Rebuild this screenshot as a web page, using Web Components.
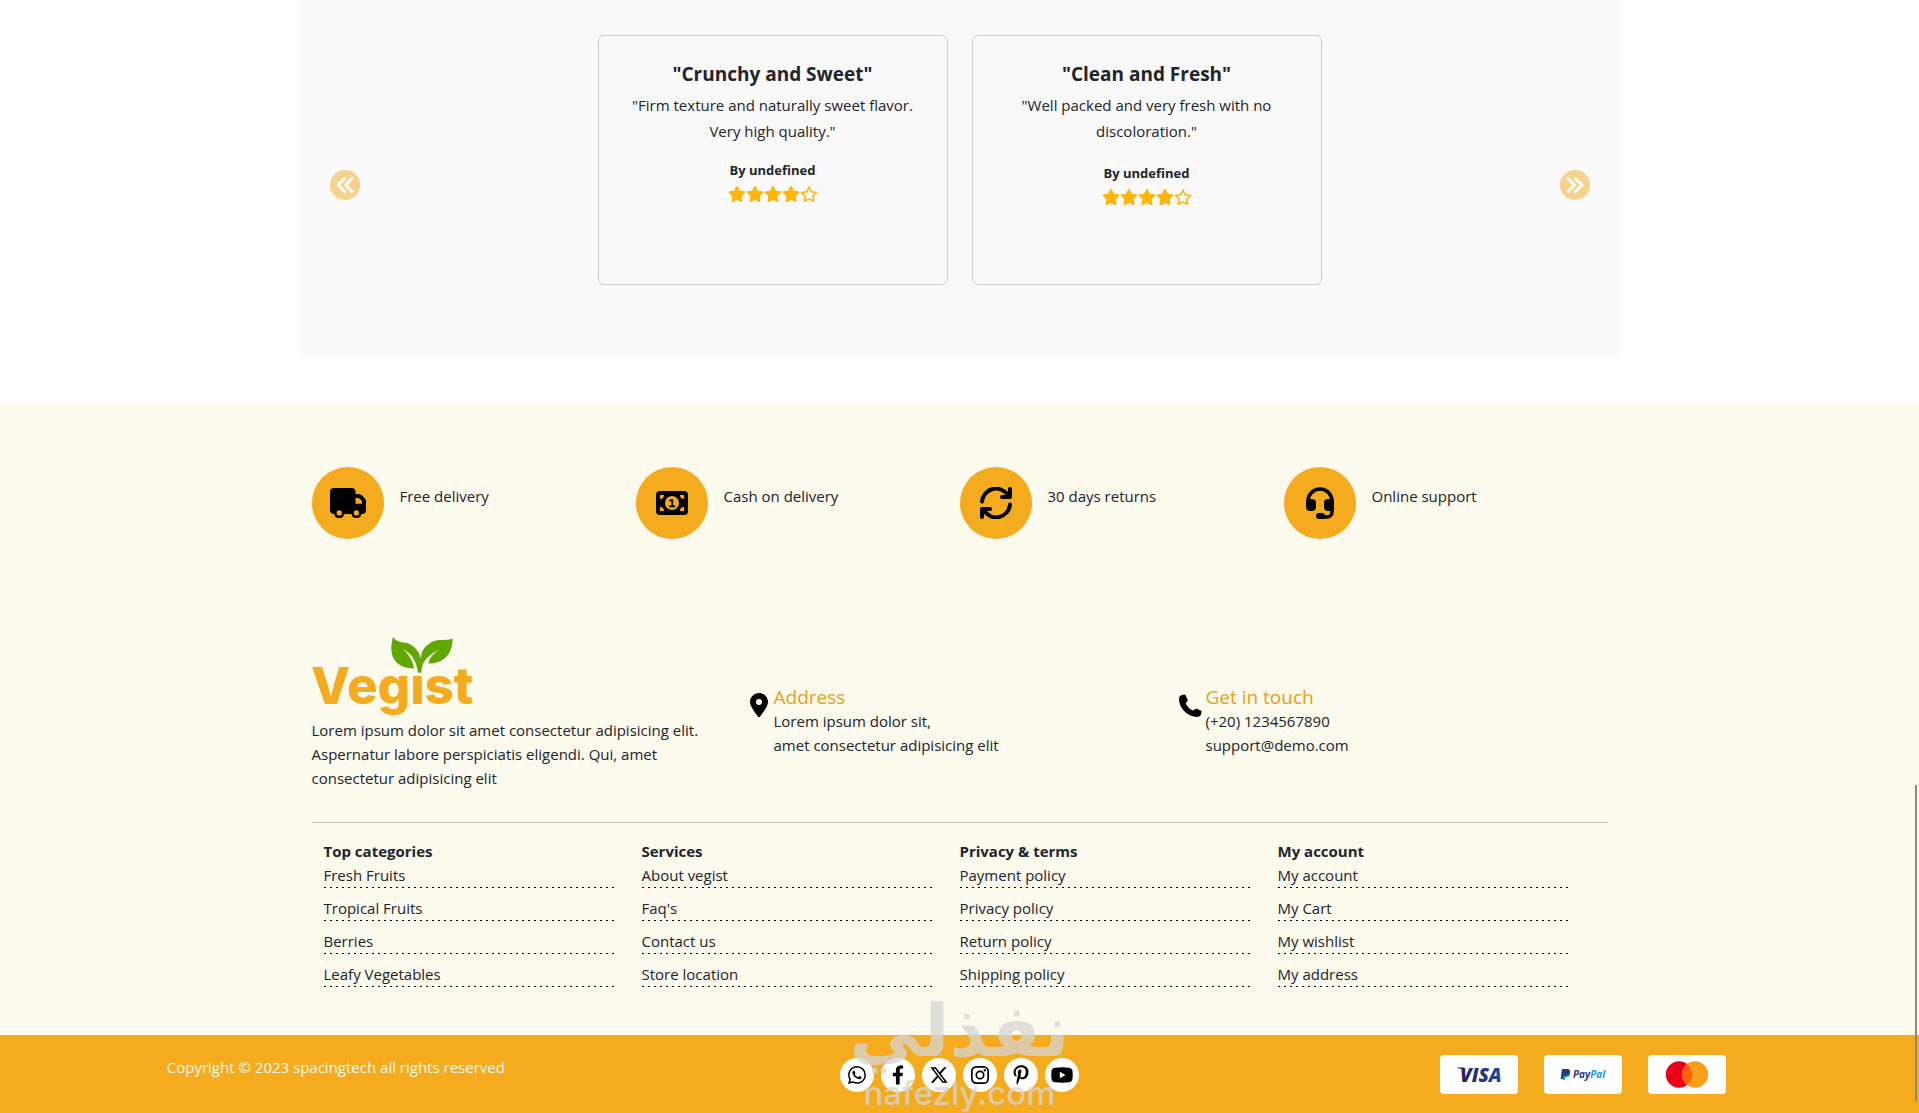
<!DOCTYPE html>
<html lang="en">
<head>
<meta charset="utf-8">
<title>Vegist</title>
<style>
  body {
    margin: 0;
    background: #fff;
    color: #212529;
    font: 15px/24px "Open Sans", "Noto Sans", sans-serif;
    position: relative;
  }
</style>
</head>
<body>
<vg-reviews>
  <vg-review heading='"Crunchy and Sweet"' author="undefined" rating="4" compact>"Firm texture and naturally sweet flavor. Very high quality."</vg-review>
  <vg-review heading='"Clean and Fresh"' author="undefined" rating="4">"Well packed and very fresh with no discoloration."</vg-review>
</vg-reviews>

<vg-footer>
  <vg-feature slot="features" icon="truck">Free delivery</vg-feature>
  <vg-feature slot="features" icon="cash">Cash on delivery</vg-feature>
  <vg-feature slot="features" icon="rotate">30 days returns</vg-feature>
  <vg-feature slot="features" icon="headset">Online support</vg-feature>

  <vg-about slot="about">Lorem ipsum dolor sit amet consectetur adipisicing elit. Aspernatur labore perspiciatis eligendi. Qui, amet consectetur adipisicing elit</vg-about>
  <vg-contact slot="about" icon="pin" heading="Address">Lorem ipsum dolor sit,<br>amet consectetur adipisicing elit</vg-contact>
  <vg-contact slot="about" icon="phone" heading="Get in touch">(+20) 1234567890<br>support@demo.com</vg-contact>

  <vg-links slot="links" heading="Top categories" items="Fresh Fruits|Tropical Fruits|Berries|Leafy Vegetables"></vg-links>
  <vg-links slot="links" heading="Services" items="About vegist|Faq's|Contact us|Store location"></vg-links>
  <vg-links slot="links" heading="Privacy &amp; terms" items="Payment policy|Privacy policy|Return policy|Shipping policy"></vg-links>
  <vg-links slot="links" heading="My account" items="My account|My Cart|My wishlist|My address"></vg-links>
</vg-footer>

<vg-bottom-bar>Copyright © 2023 spacingtech all rights reserved</vg-bottom-bar>
<vg-watermark></vg-watermark>
<vg-scroll-thumb></vg-scroll-thumb>

<script>
const STAR = "M316.9 18C311.6 7 300.4 0 288.1 0s-23.4 7-28.8 18L195 150.3 51.4 171.5c-12 1.8-22 10.2-25.7 21.7s-.7 24.2 7.9 32.7L137.8 329 113.2 474.7c-2 12 3 24.2 12.9 31.3s23 8 33.8 2.3l128.3-68.5 128.3 68.5c10.8 5.7 23.9 4.9 33.8-2.3s14.9-19.3 12.9-31.3L438.5 329 542.7 225.9c8.6-8.5 11.7-21.2 7.9-32.7s-13.7-19.9-25.7-21.7L381.2 150.3 316.9 18z";

// name: [width, height, viewBox, markup]
const ICONS = {
  star: [18, 16, "0 0 576 512", `<path d="${STAR}"/>`],
  starEmpty: [18, 16, "0 0 576 512",
    `<path d="M288 35L362 187L528 211L408 328L437 490L288 413L139 490L168 328L48 211L214 187Z" fill="none" stroke="currentColor" stroke-width="50" stroke-linejoin="round"/>`],
  prev: [30, 30, "0 0 30 30",
    `<circle cx="15" cy="15" r="15" fill="#f5ab1e" opacity=".5"/><path d="M14.500 8.500L8 15L14.500 21.500M22 8.500L15.500 15L22 21.500" fill="none" stroke="#fff" stroke-width="3" stroke-linecap="round" stroke-linejoin="round"/>`],
  next: [30, 30, "0 0 30 30",
    `<circle cx="15" cy="15" r="15" fill="#f5ab1e" opacity=".5"/><path d="M8 8.500L14.500 15L8 21.500M15.500 8.500L22 15L15.500 21.500" fill="none" stroke="#fff" stroke-width="3" stroke-linecap="round" stroke-linejoin="round"/>`],
  truck: [36, 30, "0 0 36 30",
    `<path fill-rule="evenodd" d="M4 0H21.500Q25.500 0 25.500 4V6H28.500Q30.500 6 32 7.500L34.500 10Q36 11.500 36 13.500V22Q36 26 32 26H31.500A5.200 5.200 0 0 1 21.300 26H14.300A5.200 5.200 0 0 1 4.100 26H4Q0 26 0 22V4Q0 0 4 0ZM25.500 10V15.700H32V14Q32 13.200 31.400 12.600L29.500 10.600Q28.900 10 28 10ZM9.200 22.300A2.600 2.600 0 1 0 9.200 27.500A2.600 2.600 0 1 0 9.200 22.300ZM26.400 22.300A2.600 2.600 0 1 0 26.400 27.500A2.600 2.600 0 1 0 26.400 22.300Z"/>`],
  cash: [32, 24, "0 0 32 24",
    `<rect width="32" height="24" rx="4"/><g fill="#f5ab1e"><circle cx="16" cy="12" r="7"/><path d="M4 4H8A4 4 0 0 1 4 8ZM28 4H24A4 4 0 0 0 28 8ZM4 20H8A4 4 0 0 0 4 16ZM28 20H24A4 4 0 0 1 28 16Z"/></g><path d="M14 9.500L16.300 8.800V15M13.800 15.300H18.600" fill="none" stroke="currentColor" stroke-width="1.800" stroke-linecap="round" stroke-linejoin="round"/>`],
  rotate: [32, 32, "0 0 32 32",
    `<g fill="none" stroke="currentColor" stroke-width="4" stroke-linecap="round" stroke-linejoin="round"><path d="M2 14.500A14 14 0 0 1 28 8.500M30 2V10H22"/><path d="M30 17.500A14 14 0 0 1 4 23.500M2 30V22H10"/></g>`],
  headset: [28, 32, "0 0 28 32",
    `<path d="M2 17V14A12 12 0 0 1 26 14V25A5 5 0 0 1 21 30H14" fill="none" stroke="currentColor" stroke-width="3.600"/><rect y="12" width="10" height="12" rx="4"/><rect x="18" y="12" width="10" height="12" rx="4"/><rect x="10" y="26" width="9" height="6" rx="3"/>`],
  pin: [18, 24, "0 0 384 512",
    `<path d="M215.700 499.200C267 435 384 279.400 384 192C384 86 298 0 192 0S0 86 0 192c0 87.400 117 243 168.300 307.200c12.300 15.300 35.100 15.300 47.400 0zM192 128a64 64 0 1 1 0 128 64 64 0 1 1 0-128z"/>`],
  phone: [24, 24, "0 0 512 512",
    `<path d="M120 55C60 60 22 85 22 125C22 320 200 490 390 490C430 490 455 460 460 400L370 355L300 400C220 365 150 295 115 215L165 155Z" stroke="currentColor" stroke-width="44" stroke-linejoin="round"/>`],
  whatsapp: [18, 18, "0 0 16 16",
    `<path d="M13.601 2.326A7.850 7.850 0 0 0 7.994 0C3.627 0 .068 3.558.064 7.926c0 1.399.366 2.760 1.057 3.965L0 16l4.204-1.102a7.900 7.900 0 0 0 3.790.965h.004c4.368 0 7.926-3.558 7.930-7.930A7.900 7.900 0 0 0 13.600 2.326zM7.994 14.521a6.600 6.600 0 0 1-3.356-.920l-.240-.144-2.494.654.666-2.433-.156-.251a6.560 6.560 0 0 1-1.007-3.505c0-3.626 2.957-6.584 6.591-6.584a6.560 6.560 0 0 1 4.660 1.931 6.560 6.560 0 0 1 1.928 4.660c-.004 3.639-2.961 6.592-6.592 6.592m3.615-4.934c-.197-.099-1.170-.578-1.353-.646-.182-.065-.315-.099-.445.099-.133.197-.513.646-.627.775-.114.133-.232.148-.430.050-.197-.100-.836-.308-1.592-.985-.590-.525-.985-1.175-1.103-1.372-.114-.198-.011-.304.088-.403.087-.088.197-.232.296-.346.100-.114.133-.198.198-.330.065-.134.034-.248-.015-.347-.050-.099-.445-1.076-.612-1.470-.160-.389-.323-.335-.445-.340-.114-.007-.247-.007-.380-.007a.730.730 0 0 0-.529.247c-.182.198-.691.677-.691 1.654s.710 1.916.810 2.049c.098.133 1.394 2.132 3.383 2.992.470.205.840.326 1.129.418.475.152.904.129 1.246.080.380-.058 1.171-.480 1.338-.943.164-.464.164-.860.114-.943-.049-.084-.182-.133-.380-.232"/>`],
  facebook: [12, 20, "0 0 320 512",
    `<path d="M279.140 288l14.220-92.660h-88.910v-60.130c0-25.350 12.420-50.060 52.240-50.060h40.420V6.260S260.430 0 225.360 0c-73.220 0-121.080 44.380-121.080 124.720v70.620H22.890V288h81.390v224h100.170V288z"/>`],
  x: [18, 18, "16 16 480 480",
    `<path d="M389.200 48h70.600L305.600 224.200 487 464H345L233.700 318.600 106.500 464H35.800L200.700 275.500 26.800 48H172.400L272.900 180.900 389.200 48zM364.400 421.800h39.100L151.100 88h-42L364.400 421.800z"/>`],
  instagram: [18, 18, "0 0 18 18",
    `<g fill="none" stroke="currentColor" stroke-width="1.700"><rect x=".850" y=".850" width="16.300" height="16.300" rx="4.500"/><circle cx="9" cy="9" r="3.700"/></g><circle cx="13.800" cy="4.200" r="1.200"/>`],
  pinterest: [16, 20, "0 0 384 512",
    `<path d="M204 6.500C101.400 6.500 0 74.900 0 185.600 0 256 39.600 296 63.600 296c9.900 0 15.600-27.600 15.600-35.400 0-9.300-23.700-29.100-23.700-67.800 0-80.400 61.200-137.400 140.400-137.400 68.100 0 118.500 38.700 118.500 109.800 0 53.100-21.300 152.700-90.300 152.700-24.900 0-46.200-18-46.200-43.800 0-37.800 26.400-74.400 26.400-113.400 0-66.200-93.900-54.200-93.900 25.800 0 16.800 2.100 35.400 9.600 50.700-13.800 59.400-42 147.900-42 209.100 0 18.900 2.700 37.500 4.500 56.400 3.400 3.800 1.700 3.400 6.900 1.500 50.400-69 48.600-82.500 71.400-172.800 12.300 23.400 44.100 36 69.300 36 106.200 0 153.900-103.500 153.900-196.800C384 71.300 298.200 6.500 204 6.500z"/>`],
  youtube: [22, 16, "0 0 22 16",
    `<path fill-rule="evenodd" d="M4 .700Q11 0 18 .700Q21 1 21.500 4Q22 8 21.500 12Q21 15 18 15.300Q11 16 4 15.300Q1 15 .500 12Q0 8 .500 4Q1 1 4 .700ZM8.800 4.800V11.200L14.500 8Z"/>`],
  visa: [78, 39, "0 0 78 39",
    `<defs><linearGradient id="v"><stop offset="0" stop-color="#241f5d"/><stop offset="1" stop-color="#22489c"/></linearGradient></defs><path d="M17 12.500H24L25.500 16Q22 13.500 17 13Z" fill="#241f5d"/><text x="20" y="27" font-family="Open Sans" font-size="19" font-weight="800" font-style="italic" fill="url(#v)">VISA</text>`],
  paypal: [78, 39, "0 0 78 39",
    `<path d="M18 14H23Q27 14.300 26 18Q25 21 21.500 21H20L19.300 24H16.700Z" fill="#253b80"/><path d="M26 16.500Q27 22 22.500 22H21.500L20.800 25H18.700L19.700 21H21.500Q25 20.500 26 16.500Z" fill="#179bd7"/><text x="29" y="23" font-family="Open Sans" font-size="10" font-weight="700" font-style="italic"><tspan fill="#253b80">Pay</tspan><tspan fill="#179bd7">Pal</tspan></text>`],
  mastercard: [78, 39, "0 0 78 39",
    `<circle cx="31" cy="19.500" r="13.200" fill="#eb001b"/><circle cx="47" cy="19.500" r="13.200" fill="#f79e1b"/><path d="M39 9A13.200 13.200 0 0 1 39 30A13.200 13.200 0 0 1 39 9Z" fill="#ff5f00"/>`],
};

function icon(name) {
  const [w, h, box, body] = ICONS[name];
  return `<svg width="${w}" height="${h}" viewBox="${box}" fill="currentColor" aria-hidden="true">${body}</svg>`;
}

class VgElement extends HTMLElement {
  connectedCallback() {
    if (this.shadowRoot)
      return;
    const shadow = this.attachShadow({ mode: "open" });
    shadow.innerHTML = `<style>svg { display: block; flex: none; }</style>` + this.render();
  }
}

customElements.define("vg-reviews", class extends VgElement {
  render() {
    return `
      <style>
        :host {
          display: block;
          box-sizing: border-box;
          max-width: 1320px;
          margin: 0 auto;
          padding: 35px 30px 21px;
          background: #f9f9f9;
        }
        .slider {
          display: flex;
          align-items: center;
          justify-content: space-between;
          height: 300px;
        }
        .track {
          display: flex;
          gap: 24px;
          align-self: flex-start;
        }
        button {
          padding: 0;
          border: 0;
          background: none;
          cursor: pointer;
        }
      </style>
      <div class="slider">
        <button aria-label="Previous">${icon("prev")}</button>
        <div class="track"><slot></slot></div>
        <button aria-label="Next">${icon("next")}</button>
      </div>`;
  }
});

customElements.define("vg-review", class extends VgElement {
  render() {
    const rating = Number(this.getAttribute("rating"));
    let stars = "";
    for (let i = 0; i < 5; ++i)
      stars += icon(i < rating ? "star" : "starEmpty");
    return `
      <style>
        :host {
          display: block;
          box-sizing: border-box;
          width: 350px;
          height: 250px;
          padding: 26px 28px;
          border: 1px solid #ccc;
          border-radius: 6px;
          text-align: center;
        }
        h3 { margin: 0 0 6px; font-size: 19px; line-height: 24px; }
        p { margin: 0 0 19px; line-height: 26px; }
        :host([compact]) p { margin-bottom: 16px; }
        strong { display: block; font-size: 13px; line-height: 20px; }
        .stars {
          display: flex;
          justify-content: center;
          margin-top: 6px;
          color: #ffb50a;
        }
      </style>
      <h3>${this.getAttribute("heading")}</h3>
      <p><slot></slot></p>
      <strong>By ${this.getAttribute("author")}</strong>
      <div class="stars" role="img" aria-label="${rating} of 5">${stars}</div>`;
  }
});

customElements.define("vg-footer", class extends VgElement {
  render() {
    return `
      <style>
        :host {
          display: block;
          margin-top: 47px;
          padding: 64px 12px 48px;
          background: #fcf9ed;
        }
        .container { max-width: 1296px; margin: 0 auto; }
        .features { display: grid; grid-template-columns: repeat(4, 1fr); }
        .about {
          display: grid;
          grid-template-columns: repeat(3, 1fr);
          margin-top: 98px;
          padding-bottom: 32px;
          border-bottom: 1px solid #c9c7be;
        }
        .links {
          display: grid;
          grid-template-columns: repeat(4, 1fr);
          gap: 24px;
          padding: 16px 36px 0 12px;
        }
      </style>
      <div class="container">
        <div class="features"><slot name="features"></slot></div>
        <div class="about"><slot name="about"></slot></div>
        <div class="links"><slot name="links"></slot></div>
      </div>`;
  }
});

customElements.define("vg-feature", class extends VgElement {
  render() {
    return `
      <style>
        :host { display: flex; gap: 16px; }
        .disc {
          display: grid;
          place-items: center;
          width: 72px;
          height: 72px;
          border-radius: 50%;
          background: #f5ab1e;
          color: #000;
        }
        .label { padding-top: 17px; }
      </style>
      <div class="disc">${icon(this.getAttribute("icon"))}</div>
      <div class="label"><slot></slot></div>`;
  }
});

customElements.define("vg-about", class extends VgElement {
  render() {
    // The patch behind the leaves hides the dot of the "i".
    return `
      <style>
        :host { display: block; }
        svg { overflow: visible; }
        p { margin: 0; }
      </style>
      <svg width="163" height="81" viewBox="0 0 163 81" role="img" aria-label="Vegist">
        <text x="-1" y="67" font-family="Inter" font-size="51" font-weight="800" fill="#f5ab1e">Vegist</text>
        <rect x="98" y="20" width="22" height="18" fill="#fcf9ed"/>
        <path fill="#5fa800" d="M81 0C76 18 82 31 102 31.500C101 24 97 18 91 12C100 17 104.500 24 106 35.700H109.500C110 26 113 20 128 12C121 17 117.500 21 116.500 26.500C130 27 141 18 140.500 1.500C135 4 128 2 122 4C113 8 109 14 109 22C106 10 98 6 91 5.500C86 5 83 3 81 0Z"/>
      </svg>
      <p><slot></slot></p>`;
  }
});

customElements.define("vg-contact", class extends VgElement {
  render() {
    return `
      <style>
        :host { display: flex; gap: 3px; padding: 48px 0 0 3px; }
        .icon {
          display: flex;
          justify-content: center;
          width: 24px;
          padding-top: 8px;
          color: #000;
        }
        h4 { margin: 0; font-size: 19px; font-weight: 400; line-height: 24px; color: #e2a121; }
      </style>
      <div class="icon">${icon(this.getAttribute("icon"))}</div>
      <div>
        <h4>${this.getAttribute("heading")}</h4>
        <slot></slot>
      </div>`;
  }
});

customElements.define("vg-links", class extends VgElement {
  render() {
    const items = this.getAttribute("items").split("|");
    return `
      <style>
        :host { display: block; }
        h5 { margin: 0; font-size: 15px; line-height: 24px; }
        ul { display: grid; gap: 8px; margin: 0; padding: 0; list-style: none; }
        a {
          display: block;
          padding-bottom: 1px;
          background: repeating-linear-gradient(90deg, #000 0 2px, transparent 2px 6px) bottom / 100% 1px no-repeat;
          color: inherit;
          text-decoration: none;
        }
      </style>
      <h5>${this.getAttribute("heading")}</h5>
      <ul>${items.map((item) => `<li><a href="#">${item}</a></li>`).join("")}</ul>`;
  }
});

customElements.define("vg-bottom-bar", class extends VgElement {
  render() {
    const socials = ["whatsapp", "facebook", "x", "instagram", "pinterest", "youtube"];
    const payments = ["visa", "paypal", "mastercard"];
    return `
      <style>
        :host {
          display: grid;
          grid-template-columns: repeat(3, 1fr);
          justify-items: center;
          padding: 20px 24px 19px;
          background: #f5ab1e;
          color: #fcf9ed;
        }
        .socials { display: flex; gap: 7px; align-self: center; }
        .socials a {
          display: grid;
          place-items: center;
          width: 34px;
          height: 34px;
          border-radius: 50%;
          background: #fff;
          color: #000;
        }
        .payments { display: flex; gap: 26px; }
        .payments div { border-radius: 4px; background: #fff; }
      </style>
      <div><slot></slot></div>
      <div class="socials">${socials.map((s) => `<a href="#" aria-label="${s}">${icon(s)}</a>`).join("")}</div>
      <div class="payments">${payments.map((p) => `<div>${icon(p)}</div>`).join("")}</div>`;
  }
});

customElements.define("vg-watermark", class extends VgElement {
  render() {
    return `
      <style>
        :host {
          display: block;
          position: absolute;
          left: 0;
          right: 0;
          bottom: 0;
          text-align: center;
          color: #d5d5d5;
          opacity: .75;
          pointer-events: none;
        }
        .arabic { font: bold 72px/84px "DejaVu Sans", sans-serif; }
        .latin { font: 500 33px/40px Inter, sans-serif; }
      </style>
      <div class="arabic" lang="ar" dir="rtl">نفذلي</div>
      <div class="latin">nafezly.com</div>`;
  }
});

customElements.define("vg-scroll-thumb", class extends VgElement {
  render() {
    return `
      <style>
        :host {
          display: block;
          position: absolute;
          right: 2px;
          bottom: 12px;
          width: 2px;
          height: 316px;
          background: #8b887c;
        }
      </style>`;
  }
});
</script>
</body>
</html>
